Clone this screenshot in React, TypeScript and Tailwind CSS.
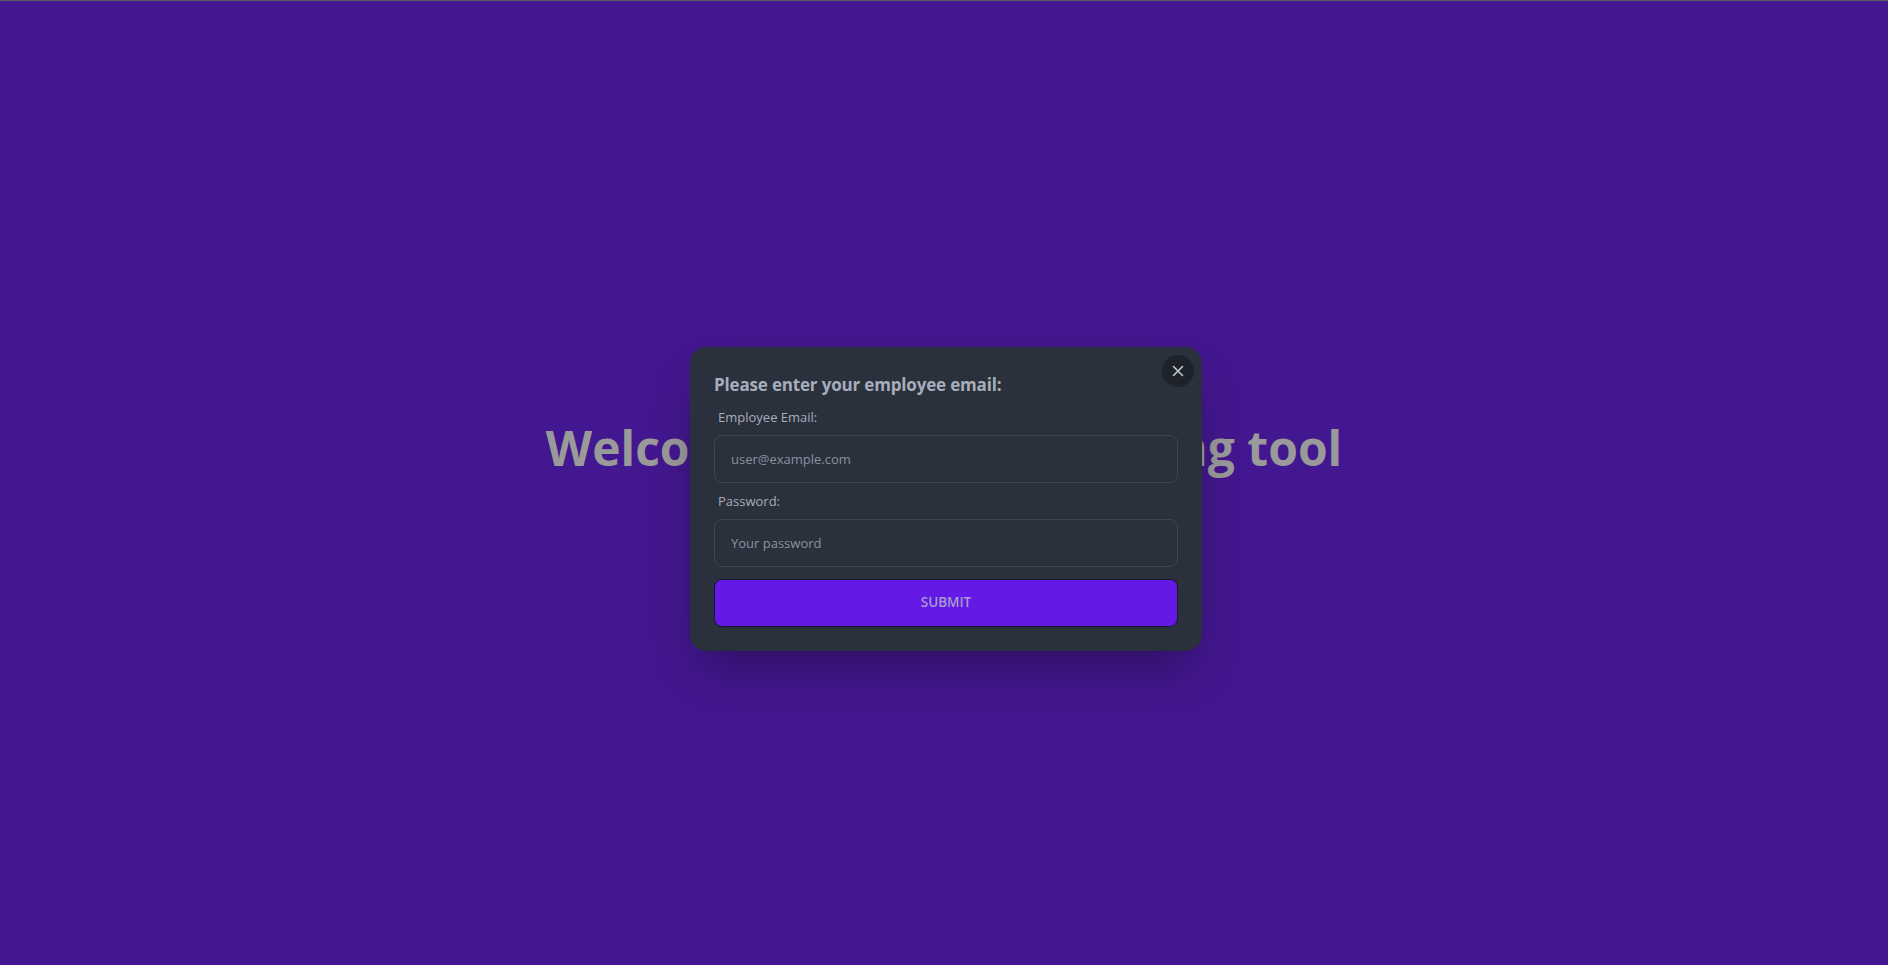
import React from "react";

export default function App() {
  return (
    <div
      className="relative h-screen w-full overflow-hidden border-t border-[#5b5b5b] bg-[#43178f]"
      style={{ fontFamily: '"Open Sans", "Noto Sans", sans-serif' }}
    >
      <div className="flex h-full w-full items-center justify-center">
        <h1 className="mb-[70px] text-5xl font-bold text-[#9a9a9a]">
          Welcome to the timekeeping tool
        </h1>
      </div>

      <div className="absolute inset-0 flex items-center justify-center pl-[4px] pt-[31px]">
        <div className="relative w-[512px] rounded-2xl bg-[#2a303c] p-6 shadow-[0_25px_50px_-12px_rgba(0,0,0,0.35)]">
          <button
            type="button"
            className="absolute right-2 top-2 flex h-8 w-8 items-center justify-center rounded-full bg-[#1e222a] text-[#c4cad4]"
          >
            <svg width="12" height="12" viewBox="0 0 12 12" fill="none">
              <path d="M1.5 1.5L10.5 10.5M10.5 1.5L1.5 10.5" stroke="currentColor" strokeWidth="1.6" strokeLinecap="round" />
            </svg>
          </button>
          <h3 className="text-[17px] font-bold leading-7 tracking-[-0.01em] text-[#a6adbb]">
            Please enter your employee email:
          </h3>
          <label className="block px-1 py-2 text-[13px] leading-5 text-[#a6adbb]">
            Employee Email:
          </label>
          <input
            type="email"
            placeholder="user@example.com"
            className="block h-12 w-full rounded-lg border border-[#3f4552] bg-[#2a303c] px-4 text-[13px] text-[#a6adbb] outline-none placeholder:text-[#8a919e]"
          />
          <label className="block px-1 py-2 text-[13px] leading-5 text-[#a6adbb]">
            Password:
          </label>
          <input
            type="password"
            placeholder="Your password"
            className="block h-12 w-full rounded-lg border border-[#3f4552] bg-[#2a303c] px-4 text-[13px] text-[#a6adbb] outline-none placeholder:text-[#8a919e]"
          />
          <button
            type="button"
            className="mt-3 flex h-12 w-full items-center justify-center rounded-lg border border-[#1a1530] bg-[#6419e6] text-[13.5px] font-semibold uppercase text-[#a99bd0]"
          >
            Submit
          </button>
        </div>
      </div>
    </div>
  );
}
